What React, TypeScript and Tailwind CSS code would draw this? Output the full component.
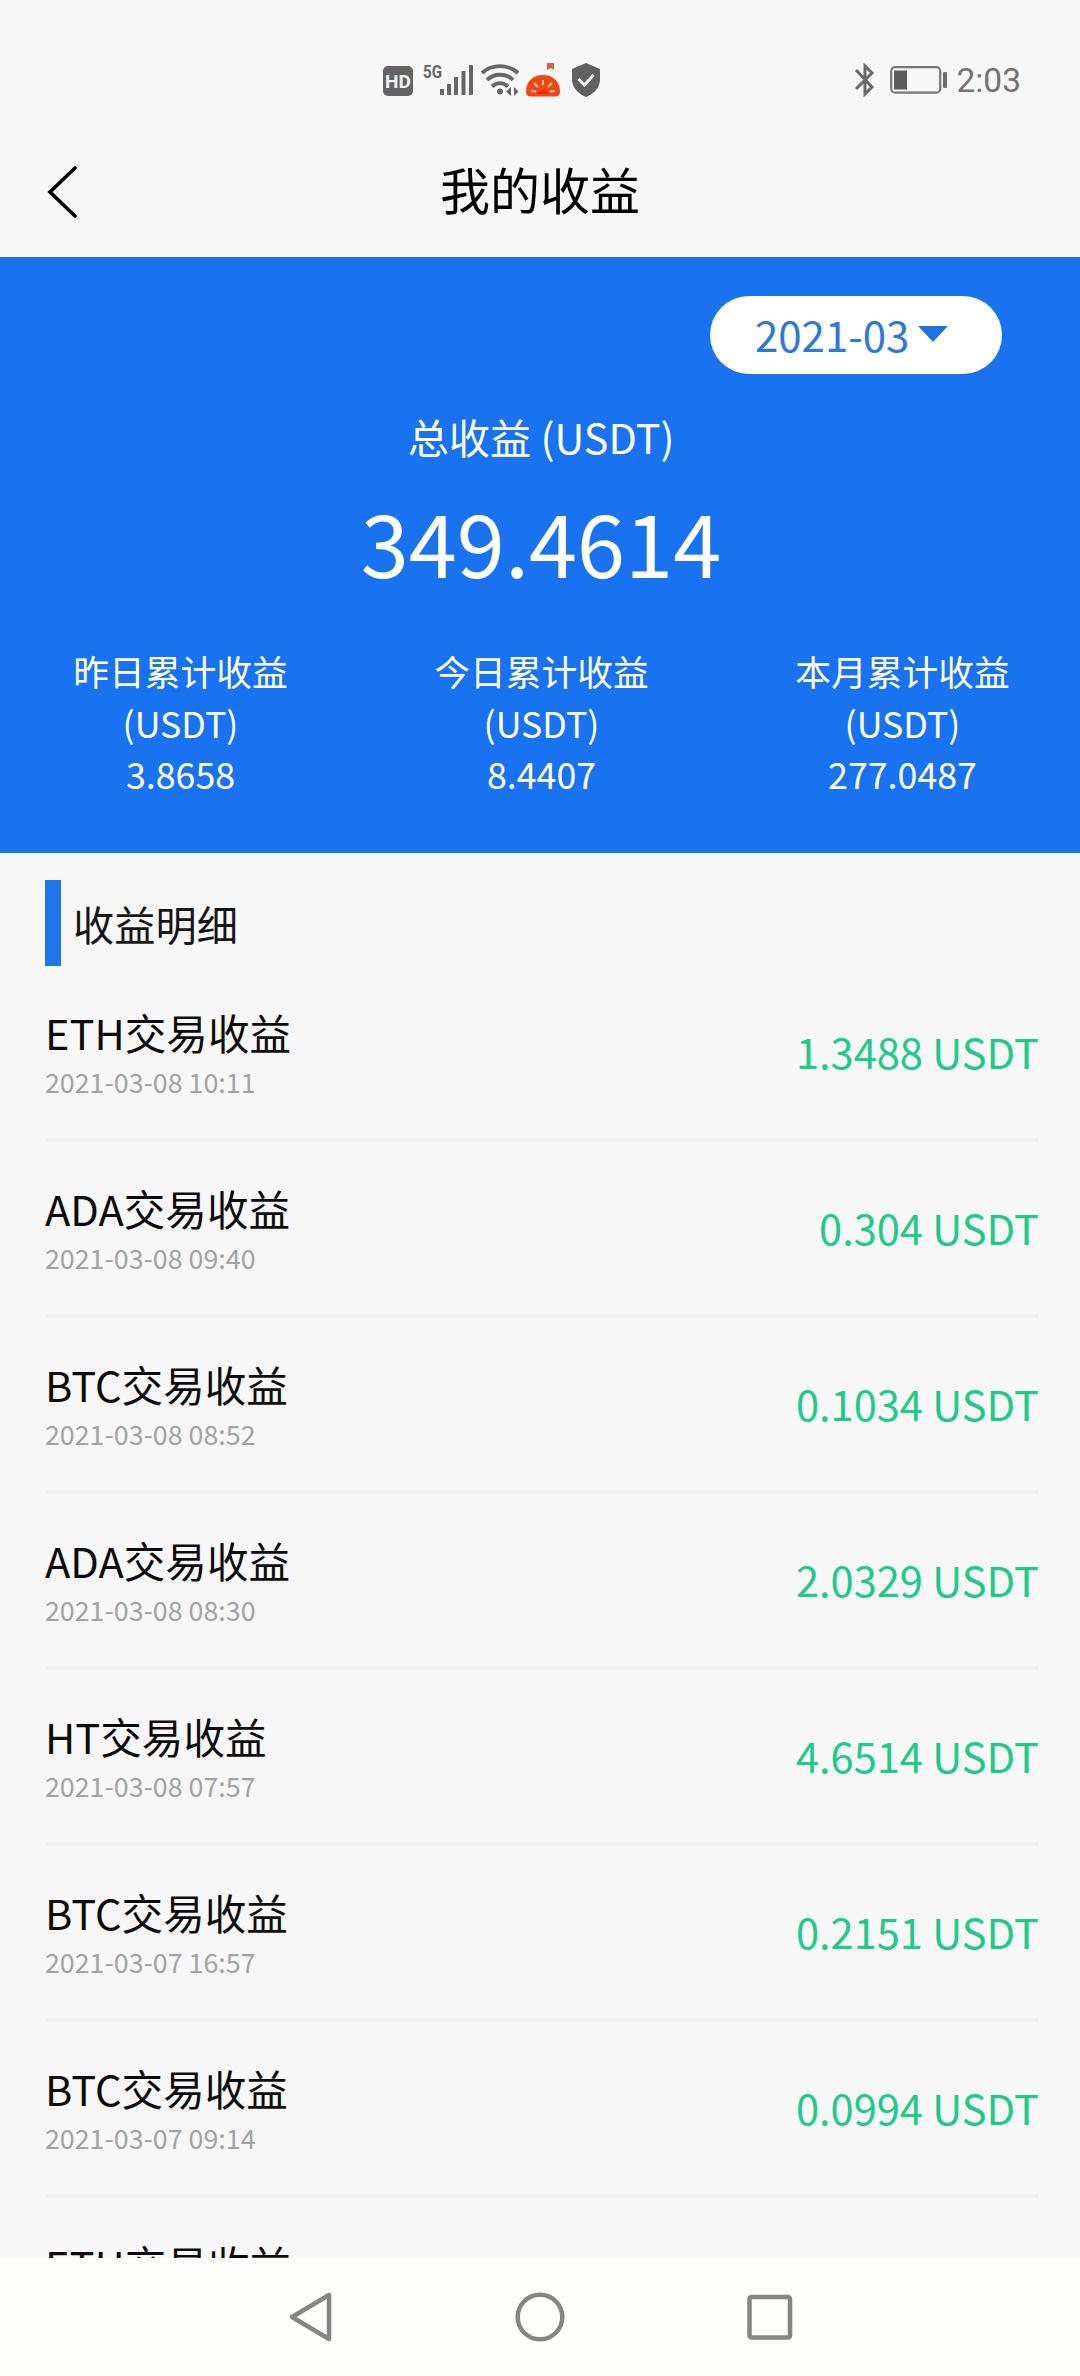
const stats = [
  { label: "昨日累计收益", value: "3.8658" },
  { label: "今日累计收益", value: "8.4407" },
  { label: "本月累计收益", value: "277.0487" },
]

const records = [
  { coin: "ETH", time: "2021-03-08 10:11", amount: "1.3488" },
  { coin: "ADA", time: "2021-03-08 09:40", amount: "0.304" },
  { coin: "BTC", time: "2021-03-08 08:52", amount: "0.1034" },
  { coin: "ADA", time: "2021-03-08 08:30", amount: "2.0329" },
  { coin: "HT", time: "2021-03-08 07:57", amount: "4.6514" },
  { coin: "BTC", time: "2021-03-07 16:57", amount: "0.2151" },
  { coin: "BTC", time: "2021-03-07 09:14", amount: "0.0994" },
]

function StatusBar() {
  return (
    <div className="flex h-[127px] items-start pt-[63px] pl-[383px] pr-[59px] text-[#666]">
      <div className="mt-[3px] flex h-[30px] w-[30px] items-center justify-center rounded-[5px] bg-[#636363] font-['Roboto',sans-serif] text-[19px] font-bold leading-none text-[#f5f5f5]">
        HD
      </div>
      <span className="ml-[10px] w-[17px] origin-left scale-x-[.8] font-['Roboto',sans-serif] text-[19px] font-bold leading-[18px]">
        5G
      </span>
      <svg className="mt-[1px]" width="34" height="32" viewBox="0 0 34 32" stroke="currentColor" strokeWidth="4">
        <path d="M2 31V25M9 31V20M16 31V13M23.500 31V7M31 31V1" />
      </svg>
      <svg className="ml-[7px]" width="38" height="33" viewBox="0 0 38 33" fill="none" stroke="currentColor" strokeWidth="3.8">
        <path d="M1 10C11 .8 27 .8 37 10M6 17C13 10 25 10 32 17M11 23.500C16 19 22 19 27 23.500" />
        <circle cx="19" cy="28.500" r="3" fill="currentColor" stroke="none" />
        <path d="M30 24v9l-5-4.500zM33 24v9l4.500-4.500z" fill="currentColor" stroke="none" />
      </svg>
      <svg className="ml-[7px]" width="34" height="34" viewBox="0 0 34 34">
        <path d="M21 0h7v7l-3.500-2L21 7z" fill="#dd6038" />
        <path d="M0 29C0 18 7 12 17 12s17 6 17 17c0 3-2 4.500-5 4.500H5c-3 0-5-1.500-5-4.500z" fill="#ec4a14" />
        <path d="M5 28l5 .5M8 20l4 4M17 17v5M26 20l-4 4M29 28l-5 .5" stroke="#ffc8a0" strokeWidth="1.900" />
        <path d="M11 31c1-5 11-5 12 0z" fill="#f42508" />
      </svg>
      <svg className="ml-[11px]" width="30" height="34" viewBox="0 0 30 34">
        <path d="M15 0L29 6v10c0 8-5 14-14 18C6 30 1 24 1 16V6z" fill="#606060" />
        <path d="M7.500 16l6 6L22.500 12" fill="none" stroke="#f2f2f2" strokeWidth="3" />
      </svg>
      <svg className="ml-auto" width="22" height="34" viewBox="0 0 22 34" fill="none" stroke="#6a6a6a" strokeWidth="3">
        <path d="M2 7L18 24L11 31V3L18 10L2 26" />
      </svg>
      <svg className="ml-[14px] mt-[3px]" width="59" height="28" viewBox="0 0 59 28">
        <rect x="1.200" y="1.200" width="49" height="25.500" rx="4" fill="none" stroke="#777" strokeWidth="2.200" />
        <rect x="4" y="4.500" width="13" height="19" fill="#5c5c5c" />
        <rect x="53" y="6" width="4" height="16" rx="1" fill="#707070" />
      </svg>
      <span className="ml-[7px] font-['Roboto',sans-serif] text-[33.5px] leading-[36px] text-[#737373]">
        2:03
      </span>
    </div>
  )
}

function Header() {
  return (
    <div className="grid h-[130px] grid-cols-3 items-center text-black">
      <svg className="ml-[46px]" width="32" height="54" viewBox="0 0 32 54" fill="none" stroke="currentColor" strokeWidth="3.600">
        <path d="M29 3L4 27L29 51" strokeLinecap="round" />
      </svg>
      <h1 className="pb-[8px] text-center text-[50px] leading-[72px]">我的收益</h1>
    </div>
  )
}

function Summary() {
  return (
    <div className="h-[596px] bg-[#1973f0] pt-[39px] text-white">
      <div className="ml-[710px] flex h-[78px] w-[292px] items-center rounded-full bg-white pb-[3px] pl-[45px] text-[42px] leading-[60px] text-[#2e78d8]">
        2021-03
        <svg className="ml-[9px]" width="30" height="16" viewBox="0 0 30 16">
          <path d="M0 0h30L15 16z" fill="#2275df" />
        </svg>
      </div>
      <div className="mt-[32px] pl-[2px] text-center text-[41.25px] leading-[60px]">总收益 (USDT)</div>
      <div className="mt-[12px] pl-[2px] text-center text-[86.6px] leading-[125px]">349.4614</div>
      <div className="mt-[42px] grid w-[1083px] grid-cols-3 text-center text-[35.75px] leading-[51.5px]">
        {stats.map(stat => (
          <div key={stat.label}>
            <div>{stat.label}</div>
            <div>(USDT)</div>
            <div>{stat.value}</div>
          </div>
        ))}
      </div>
    </div>
  )
}

function Row({ coin, time, amount }: { coin: string; time: string; amount: string }) {
  return (
    <div className="flex h-[176px] shrink-0 items-center justify-between border-b-4 border-[#efefef]">
      <div>
        <div className="text-[41.6px] leading-[60px] text-[#0c0c0c]">{coin}交易收益</div>
        <div className="text-[26.8px] leading-[40px] text-[#a2a2a2]">{time}</div>
      </div>
      <div className="pb-[2px] text-[41.6px] leading-[60px] text-[#21c98b]">{amount} USDT</div>
    </div>
  )
}

function NavBar() {
  return (
    <div className="flex h-[118px] items-center bg-[#fdfdfc] pl-[288px] text-[#858585]">
      <svg width="46" height="54" viewBox="0 0 46 54" fill="none" stroke="currentColor" strokeWidth="4.500" strokeLinejoin="round">
        <path d="M41 5v44L4 27z" />
      </svg>
      <svg className="ml-[179px]" width="54" height="54" viewBox="0 0 54 54" fill="none" stroke="currentColor" strokeWidth="4.500">
        <circle cx="27" cy="27" r="22.300" />
      </svg>
      <svg className="ml-[176px]" width="54" height="54" viewBox="0 0 54 54" fill="none" stroke="currentColor" strokeWidth="4.500">
        <rect x="6.500" y="7" width="40.500" height="40.500" rx="2" />
      </svg>
    </div>
  )
}

export default function App() {
  return (
    <div className="flex h-[2376px] w-[1080px] flex-col overflow-hidden bg-[#f7f7f7] font-['Noto_Sans_CJK_SC',sans-serif]">
      <StatusBar />
      <Header />
      <Summary />
      <div className="flex min-h-0 flex-1 flex-col overflow-hidden pt-[27px] pl-[45px] pr-[41px]">
        <h2 className="flex h-[86px] shrink-0 items-center border-l-[16px] border-[#1f76e8] pb-[1px] pl-[12px] text-[41.25px] leading-[60px] text-[#161616]">
          收益明细
        </h2>
        {records.map(record => (
          <Row key={record.time} {...record} />
        ))}
        {/* next row, scrolled under the nav bar */}
        <div className="shrink-0 pt-[36px] text-[41.6px] leading-[60px] text-[#0c0c0c]">ETH交易收益</div>
      </div>
      <NavBar />
    </div>
  )
}
